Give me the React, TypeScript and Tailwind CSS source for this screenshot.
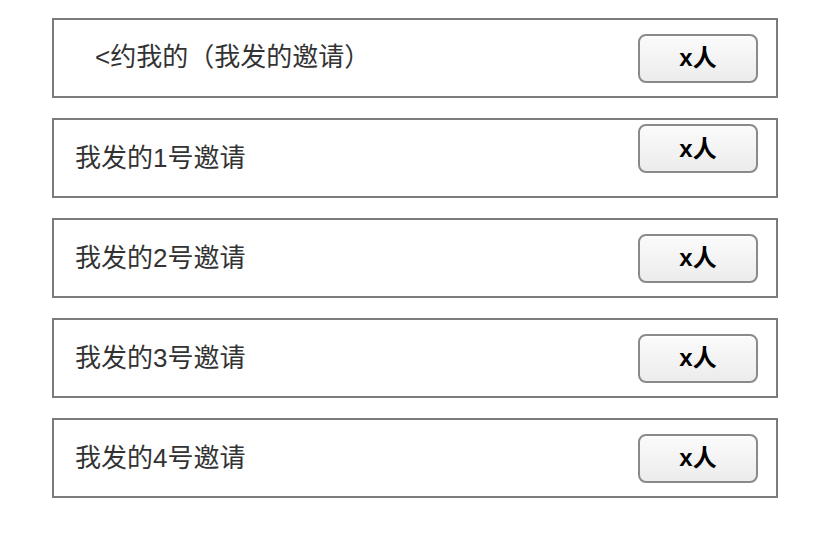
const font = { fontFamily: '"Liberation Sans", "Noto Sans CJK SC", sans-serif' };

function CountButton() {
  return (
    <button
      className="w-[120px] h-[49px] rounded-[8px] border-2 border-[#8a8a8a] bg-gradient-to-b from-[#fbfbfb] to-[#ececec] text-[24px] font-bold text-black flex items-center justify-center shrink-0 shadow-[inset_0_1px_0_#fff]"
    >
      x人
    </button>
  );
}

function Row({ label, indent, top }: { label: string; indent?: boolean; top?: boolean }) {
  return (
    <div
      className={`h-20 border-2 border-[#7b7b7b] flex justify-between pr-[18px] ${top ? 'items-start pt-1' : 'items-center'} ${indent ? 'pl-[41px]' : 'pl-[21px]'}`}
    >
      <span className={`text-[26px] text-[#333] ${top ? 'self-center -mt-1' : indent ? '-mt-0.5' : ''}`}>{label}</span>
      <CountButton />
    </div>
  );
}

export default function App() {
  return (
    <div className="w-[816px] h-[548px] bg-white pt-[18px] pl-[52px]" style={font}>
      <div className="w-[726px] flex flex-col gap-5">
        <Row label="<约我的（我发的邀请）" indent />
        <Row label="我发的1号邀请" top />
        <Row label="我发的2号邀请" />
        <Row label="我发的3号邀请" />
        <Row label="我发的4号邀请" />
      </div>
    </div>
  );
}
